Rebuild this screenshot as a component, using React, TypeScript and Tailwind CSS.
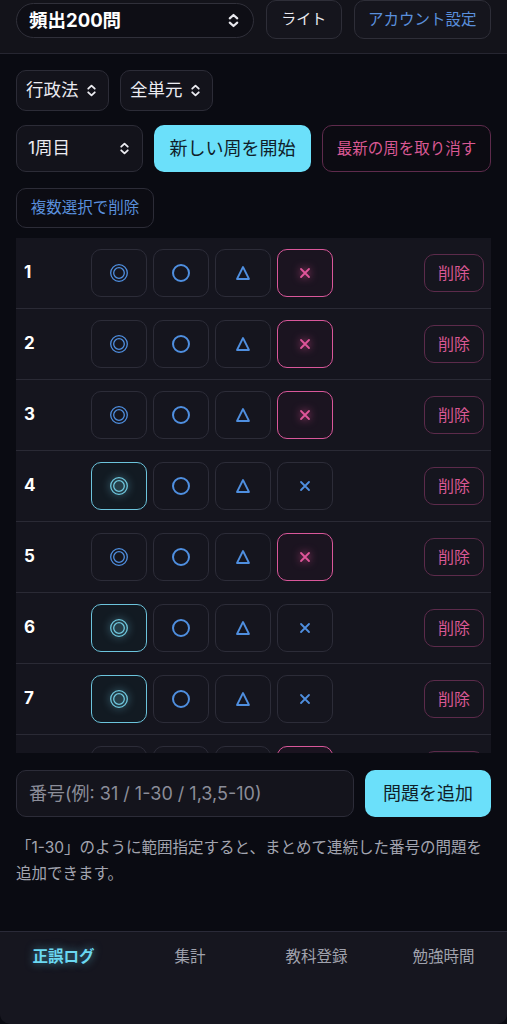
import React from "react";

const font = { fontFamily: '"Inter", "Noto Sans CJK JP", "Noto Sans", sans-serif' };

function Chev({ size = 14 }: { size?: number }) {
  return (
    <svg width={size} height={size} viewBox="0 0 14 14" fill="none" stroke="currentColor" strokeWidth="2" strokeLinecap="round" strokeLinejoin="round">
      <path d="M3.5 5 L7 1.8 L10.5 5" />
      <path d="M3.5 9 L7 12.2 L10.5 9" />
    </svg>
  );
}

function Double({ glow }: { glow?: boolean }) {
  return (
    <svg width="20" height="20" viewBox="0 0 20 20" fill="none" stroke={glow ? "#6fc8de" : "#4f8fe0"} strokeWidth="1.3" style={glow ? { filter: "drop-shadow(0 0 4px rgba(111,200,222,0.8))" } : undefined}>
      <circle cx="10" cy="10" r="8.3" />
      <circle cx="10" cy="10" r="5.3" />
    </svg>
  );
}
function Circle() {
  return (
    <svg width="20" height="20" viewBox="0 0 20 20" fill="none" stroke="#4f8fe0" strokeWidth="2">
      <circle cx="10" cy="10" r="8" />
    </svg>
  );
}
function Tri() {
  return (
    <svg width="16" height="16" viewBox="0 0 16 16" fill="none" stroke="#4f8fe0" strokeWidth="1.8" strokeLinejoin="round">
      <path d="M8 2 L14 14 L2 14 Z" />
    </svg>
  );
}
function Cross({ on }: { on?: boolean }) {
  return (
    <svg width="12" height="12" viewBox="0 0 12 12" fill="none" stroke={on ? "#e0569a" : "#4f8fe0"} strokeWidth="1.8" strokeLinecap="round" style={on ? { filter: "drop-shadow(0 0 4px rgba(230,80,150,0.9))" } : undefined}>
      <path d="M2 2 L10 10 M10 2 L2 10" />
    </svg>
  );
}

const rows: { n: number; sel: "d" | "x" }[] = [
  { n: 1, sel: "x" },
  { n: 2, sel: "x" },
  { n: 3, sel: "x" },
  { n: 4, sel: "d" },
  { n: 5, sel: "x" },
  { n: 6, sel: "d" },
  { n: 7, sel: "d" },
  { n: 8, sel: "x" },
];

const cellBase = "w-[56px] h-[48px] rounded-[10px] border flex items-center justify-center shrink-0";

function Row({ n, sel }: { n: number; sel: "d" | "x" }) {
  return (
    <div className="h-[71px] shrink-0 flex items-center border-b border-[#2a2a35] pl-[8px] pr-[7px]">
      <div className="w-[67px] text-[17px] font-bold text-white">{n}</div>
      <div className="flex gap-[6px]">
        <div className={`${cellBase} ${sel === "d" ? "border-[#6cc4dc] border-[1.5px] bg-[#121a22]" : "border-[#2c2c38]"}`}>
          <Double glow={sel === "d"} />
        </div>
        <div className={`${cellBase} border-[#2c2c38]`}>
          <Circle />
        </div>
        <div className={`${cellBase} border-[#2c2c38]`}>
          <Tri />
        </div>
        <div className={`${cellBase} ${sel === "x" ? "border-[#d9579a] border-[1.5px] bg-[#1b1420]" : "border-[#2c2c38]"}`}>
          <Cross on={sel === "x"} />
        </div>
      </div>
      <div className="ml-auto w-[60px] h-[38px] rounded-[10px] border border-[#5c2b4b] text-[#d95893] text-[16px] flex items-center justify-center">
        削除
      </div>
    </div>
  );
}

export default function App() {
  return (
    <div style={font} className="w-[507px] h-[1024px] bg-[#0a0b12] flex flex-col overflow-hidden">
      {/* header */}
      <div className="h-[54px] shrink-0 bg-[#13131a] border-b border-[#262631] flex items-start px-[16px] gap-[12px]">
        <div className="mt-[3px] w-[239px] h-[35px] rounded-full border border-[#30303a] bg-[#0e0e15] flex items-center pl-[12px] pr-[12px] text-white">
          <span className="text-[18.5px] font-bold">頻出200問</span>
          <span className="ml-auto text-[#e8e8ee]"><Chev size={15} /></span>
        </div>
        <div className="w-[76px] h-[39px] rounded-[10px] border border-[#2e2e38] bg-[#15151d] text-[#e9e9ef] text-[15px] flex items-center justify-center">
          ライト
        </div>
        <div className="w-[138px] h-[39px] rounded-[10px] border border-[#2e2e38] bg-[#15151d] text-[#5a8fdc] text-[15.5px] flex items-center justify-center">
          アカウント設定
        </div>
      </div>

      {/* controls */}
      <div className="flex flex-col px-[16px] pt-[16px]">
        <div className="flex gap-[11px]">
          <div className="h-[41px] w-[93px] rounded-[10px] border border-[#2c2c37] bg-[#13131b] flex items-center pl-[9px] pr-[10px] text-[#ececf2]">
            <span className="text-[17.5px]">行政法</span>
            <span className="ml-auto"><Chev size={13} /></span>
          </div>
          <div className="h-[41px] w-[93px] rounded-[10px] border border-[#2c2c37] bg-[#13131b] flex items-center pl-[9px] pr-[10px] text-[#ececf2]">
            <span className="text-[17.5px]">全単元</span>
            <span className="ml-auto"><Chev size={13} /></span>
          </div>
        </div>
        <div className="flex gap-[11px] mt-[14px]">
          <div className="h-[47px] w-[127px] rounded-[10px] border border-[#2c2c37] bg-[#13131b] flex items-center pl-[11px] pr-[11px] text-[#ececf2]">
            <span className="text-[17.5px]">1周目</span>
            <span className="ml-auto"><Chev size={13} /></span>
          </div>
          <div className="h-[47px] w-[157px] rounded-[10px] bg-[#6be0fa] text-[#102029] text-[18px] flex items-center justify-center">
            新しい周を開始
          </div>
          <div className="h-[47px] w-[169px] rounded-[10px] border border-[#5e2b4c] bg-[#0c0b12] text-[#d95893] text-[15.5px] flex items-center justify-center">
            最新の周を取り消す
          </div>
        </div>
        <div className="flex mt-[16px]">
          <div className="h-[40px] w-[138px] rounded-[10px] border border-[#2c2c37] bg-[#0c0c13] text-[#5a8fdc] text-[15.5px] flex items-center justify-center">
            複数選択で削除
          </div>
        </div>
      </div>

      {/* table */}
      <div className="mx-[16px] mt-[10px] h-[515px] shrink-0 overflow-hidden bg-[#15151e] flex flex-col">
        {rows.map((r) => (
          <Row key={r.n} n={r.n} sel={r.sel} />
        ))}
      </div>

      {/* add row */}
      <div className="flex gap-[11px] px-[16px] mt-[17px]">
        <div className="h-[47px] w-[338px] rounded-[10px] border border-[#2c2c38] bg-[#14141c] flex items-center pl-[12px] text-[#8b8d99] text-[18px]">
          番号(例: 31 / 1-30 / 1,3,5-10)
        </div>
        <div className="h-[47px] w-[126px] rounded-[10px] bg-[#6be0fa] text-[#102029] text-[18px] flex items-center justify-center">
          問題を追加
        </div>
      </div>
      <p className="px-[16px] mt-[18px] text-[15.5px] leading-[26px] text-[#a3a5b0]">
        「1-30」のように範囲指定すると、まとめて連続した番号の問題を<br />追加できます。
      </p>

      {/* bottom nav */}
      <div className="mt-auto h-[93px] shrink-0 bg-[#16161f] border-t border-[#2a2a38] rounded-b-[10px] flex items-start pt-[13px] text-[15.5px]">
        <div className="w-[127px] flex justify-center text-[#6bd8f2] font-bold" style={{ textShadow: "0 0 8px rgba(100,210,240,0.6)" }}>
          正誤ログ
        </div>
        <div className="w-[126px] flex justify-center text-[#a0a2ad]">集計</div>
        <div className="w-[127px] flex justify-center text-[#a0a2ad]">教科登録</div>
        <div className="w-[127px] flex justify-center text-[#a0a2ad]">勉強時間</div>
      </div>
    </div>
  );
}
